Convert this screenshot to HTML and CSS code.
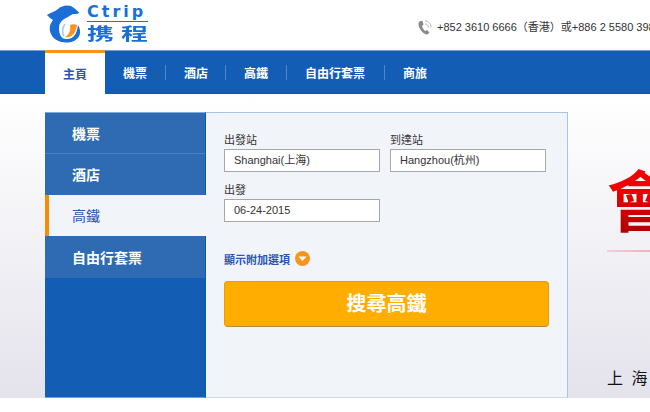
FILE: index.html
```html
<!DOCTYPE html>
<html lang="zh-Hant">
<head>
<meta charset="utf-8">
<title>Ctrip 高鐵</title>
<link rel="stylesheet" href="styles.css">
</head>
<body>
<div class="page">
  <header class="top">
    <a class="logo">
      <svg class="dolphin" width="36" height="40" viewBox="0 0 36 40">
        <path fill="#1a6fd6" d="M1 11 C5 8 9 8 12 5 C16 1 24 0 28 4 C30 6 32 7 33.500 9 C31 10 29 10 27 10 C24 11 23 13 20 14 C16 16 13 19 13 24 C13 30 15 35 20 35 C27 36 31 30 32 21 C36 28 34 34 28 37 C18 41 6 37 4 27 C3 22 5 19 7 16 C5 15 3 13 1 11 Z"/>
        <path fill="#f7941d" d="M24 21 C25 26 23 31 19 33 C26 34 30 29 31 21 C29 20 26 20 24 21 Z"/>
        <path fill="none" stroke="#a9c8ee" stroke-width="1.500" d="M19 20 C16 24 16 29 18 32"/>
      </svg>
      <span class="logo-words">
        <span class="logo-en">Ctrip</span>
        <span class="logo-zh">携程</span>
      </span>
    </a>
    <div class="phone">
      <svg class="phone-icon" width="14" height="15" viewBox="0 0 14 15">
        <path fill="#8a8a8a" d="M2 1 L4.500 1 L5.500 4.500 L4 6 C4.500 8 5.500 9.500 7 11 L9 10 L11.500 12.500 L9.500 14.500 C5 14.500 0 8 0.500 3 Z"/>
        <path fill="none" stroke="#b5b5b5" d="M7 1 C10.500 1 13 3.500 13 7.500 M7 4 C9 4 10.500 5.500 10.500 7.500"/>
      </svg>
      <span>+852 3610 6666（香港）或+886 2 5580 3988（台灣）</span>
    </div>
  </header>

  <nav class="nav">
    <a class="nav-item nav-active">主頁</a>
    <a class="nav-item">機票</a>
    <a class="nav-item nav-short">酒店</a>
    <a class="nav-item nav-wide">高鐵</a>
    <a class="nav-item nav-long">自由行套票</a>
    <a class="nav-item nav-last">商旅</a>
  </nav>

  <main class="hero">
    <section class="booker">
      <ul class="tabs">
        <li class="tab">機票</li>
        <li class="tab">酒店</li>
        <li class="tab tab-active">高鐵</li>
        <li class="tab">自由行套票</li>
      </ul>
      <form class="form">
        <div class="row">
          <label class="field"><span class="field-label">出發站</span><span class="input">Shanghai(上海)</span></label>
          <label class="field"><span class="field-label">到達站</span><span class="input">Hangzhou(杭州)</span></label>
        </div>
        <div class="row">
          <label class="field"><span class="field-label">出發</span><span class="input">06-24-2015</span></label>
        </div>
        <div class="more">
          <span class="more-text">顯示附加選項</span>
          <svg width="15" height="15" viewBox="0 0 15 15"><circle cx="7.500" cy="7.500" r="7.500" fill="#f7941d"/><path fill="#fff" d="M3.500 5.500 H11.500 L7.500 10 Z"/></svg>
        </div>
        <div class="search">搜尋高鐵</div>
      </form>
    </section>
    <aside class="promo">
      <div class="promo-big">會</div>
      <div class="promo-line"></div>
      <div class="promo-city">上 海</div>
    </aside>
  </main>
</div>
</body>
</html>
```

FILE: styles.css
```css
* { box-sizing: border-box; }
html, body { margin: 0; padding: 0; background: #fff; }
body { font-family: "Liberation Sans", "Noto Sans CJK TC", sans-serif; overflow: hidden; }
.page { width: 650px; height: 412px; overflow: hidden; }

.top { height: 50px; padding-left: 46px; display: flex; width: 900px; }
.logo { display: flex; width: 372px; flex: none; padding-top: 4px; }
.dolphin { flex: none; }
.logo-words { display: flex; flex-direction: column; width: 61px; margin-left: 5px; }
.logo-en { font: bold 16px/16px "DejaVu Sans", sans-serif; color: #1a6fd6; height: 18px; letter-spacing: 3px; white-space: nowrap; border-bottom: 1px solid #1a6fd6; }
.logo-zh { height: 20px; margin-top: 2px; font: 700 27px/27px "Noto Sans CJK SC", sans-serif; color: #1a6fd6; letter-spacing: 7px; white-space: nowrap; transform: scaleY(.64); transform-origin: top; }
.phone { display: flex; align-items: center; gap: 5px; margin-top: 20px; height: 15px; font-size: 11px; line-height: 15px; color: #333; white-space: nowrap; flex: none; }
.phone-icon { flex: none; }

.nav { height: 44px; padding-left: 45px; background: #135db4; border-top: 1px solid #6f9fd8; border-bottom: 1px solid #0c57c0; display: flex; align-items: center; }
.nav-item { display: flex; align-items: center; justify-content: center; height: 15px; padding: 0 18px; color: #fff; font-size: 12px; font-weight: bold; border-right: 1px solid #4f86c8; white-space: nowrap; }
.nav-short { padding-right: 17px; }
.nav-wide { padding-right: 18px; }
.nav-long { padding-right: 19px; }
.nav-last { border-right: 0; }
.nav-active { height: 44px; width: 60px; margin: -1px 0; padding: 0; background: #fff; color: #2a55b8; border: 0; border-top: 3px solid #f7941d; }

.hero { height: 304px; padding: 18px 0 0 45px; display: flex; background: linear-gradient(#fff, #e4e3ec); }
.booker { width: 523px; height: 286px; flex: none; display: flex; }
.tabs { list-style: none; margin: 0; padding: 0; width: 161px; flex: none; background: #135db4; border-top: 1px solid #7ea7dc; border-right: 1px solid #0c57c0; border-bottom: 1px solid #6f9fd8; }
.tab { height: 41px; padding-left: 27px; background: #2e6bb2; color: #fff; font-size: 14px; font-weight: bold; line-height: 43px; border-bottom: 1px solid #4a80c0; }
.tab:nth-child(2) { border-bottom: 1px solid #2e6bb2; }
.tab:last-child { height: 42px; line-height: 44px; border-bottom: 0; }
.tab-active { background: #f1f4f8; color: #2a55b8; font-weight: normal; padding-left: 23px; border-left: 4px solid #f78c00; margin-right: -1px; border-bottom: 0; }
.form { flex: 1; background: #f1f4f8; border-top: 1px solid #a9c4e6; border-right: 1px solid #a9c4e6; border-bottom: 1px solid #cfd8e4; padding: 21px 18px 0 18px; }
.row { display: flex; gap: 10px; margin-bottom: 12px; }
.field { display: flex; flex-direction: column; width: 156px; }
.field-label { font-size: 11px; line-height: 13px; color: #333; margin-bottom: 2px; }
.input { height: 23px; background: #fff; border: 1px solid #a8a8a8; padding-left: 9px; font-size: 11px; line-height: 21px; color: #333; }
.more { display: flex; align-items: center; gap: 5px; margin-top: 29px; height: 15px; }
.more-text { font-size: 11px; color: #2a55b8; font-weight: bold; }
.search { margin-top: 15px; height: 46px; background: #ffae00; border: 1px solid #ec9a0a; border-bottom: 1px solid #b5894a; border-radius: 4px; color: #fff; font-size: 20px; font-weight: bold; line-height: 44px; text-align: center; }

.promo { margin-left: 39px; width: 200px; flex: none; display: flex; flex-direction: column; }
.promo-big { margin-top: 45px; font: 700 66px/80px "Noto Sans CJK TC", sans-serif; background: linear-gradient(#f00000 40%, #a80000); -webkit-background-clip: text; background-clip: text; color: transparent; }
.promo-line { margin-top: 13px; height: 2px; background: linear-gradient(90deg, #f4d0d4, #e04050); }
.promo-city { margin-top: 118px; font-size: 16px; line-height: 18px; color: #111; letter-spacing: 2px; }
```
